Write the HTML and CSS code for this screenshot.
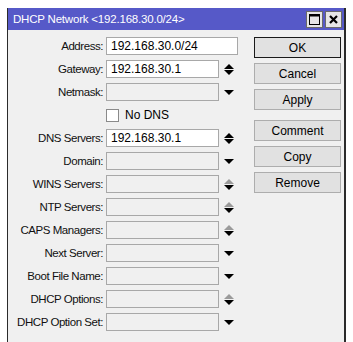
FILE: index.html
```html
<!DOCTYPE html>
<html>
<head>
<meta charset="utf-8">
<link rel="stylesheet" href="styles.css">
</head>
<body>
<div class="win">
  <div class="title">
    <span class="title-text">DHCP Network &lt;192.168.30.0/24&gt;</span>
    <div class="tbtns">
      <span class="tbtn"><svg width="13" height="13" viewBox="0 0 13 13"><rect x="1.5" y="1.5" width="10" height="10" fill="none" stroke="#000" stroke-width="1"/><rect x="1.5" y="1.5" width="10" height="2" fill="#000"/></svg></span>
      <span class="tbtn"><svg width="13" height="13" viewBox="0 0 13 13"><path d="M3 3 L10 10 M10 3 L3 10" stroke="#000" stroke-width="2.2"/></svg></span>
    </div>
  </div>
  <div class="body">
    <div class="form">
      <div class="row"><label>Address:</label><div class="field"><span class="inp wide on">192.168.30.0/24</span></div></div>
      <div class="row"><label>Gateway:</label><div class="field"><span class="inp on">192.168.30.1</span><span class="ico ud"><i class="up"></i><i class="dn"></i></span></div></div>
      <div class="row"><label>Netmask:</label><div class="field"><span class="inp"></span><span class="ico"><i class="dd"></i></span></div></div>
      <div class="row"><label></label><div class="field"><span class="chk"></span><span class="chklbl">No DNS</span></div></div>
      <div class="row"><label>DNS Servers:</label><div class="field"><span class="inp on">192.168.30.1</span><span class="ico ud"><i class="up"></i><i class="dn"></i></span></div></div>
      <div class="row"><label>Domain:</label><div class="field"><span class="inp"></span><span class="ico"><i class="dd"></i></span></div></div>
      <div class="row"><label>WINS Servers:</label><div class="field"><span class="inp"></span><span class="ico ud"><i class="up gray"></i><i class="dn"></i></span></div></div>
      <div class="row"><label>NTP Servers:</label><div class="field"><span class="inp"></span><span class="ico ud"><i class="up gray"></i><i class="dn"></i></span></div></div>
      <div class="row"><label>CAPS Managers:</label><div class="field"><span class="inp"></span><span class="ico ud"><i class="up gray"></i><i class="dn"></i></span></div></div>
      <div class="row"><label>Next Server:</label><div class="field"><span class="inp"></span><span class="ico"><i class="dd"></i></span></div></div>
      <div class="row"><label>Boot File Name:</label><div class="field"><span class="inp"></span><span class="ico"><i class="dd"></i></span></div></div>
      <div class="row"><label>DHCP Options:</label><div class="field"><span class="inp"></span><span class="ico ud"><i class="up gray"></i><i class="dn"></i></span></div></div>
      <div class="row"><label>DHCP Option Set:</label><div class="field"><span class="inp"></span><span class="ico"><i class="dd"></i></span></div></div>
    </div>
    <div class="btns">
      <div class="btn def">OK</div>
      <div class="btn">Cancel</div>
      <div class="btn">Apply</div>
      <div class="btn sep">Comment</div>
      <div class="btn">Copy</div>
      <div class="btn">Remove</div>
    </div>
  </div>
</div>
</body>
</html>
```
FILE: styles.css
```css
html, body {
  margin: 0;
  padding: 0;
  background: #ffffff;
}
body {
  font-family: "Liberation Sans", Arial, sans-serif;
  font-size: 11.5px;
  color: #000;
}
.win {
  margin: 8px 0 0 7px;
  width: 336px;
  height: 334px;
  border-left: 1px solid #2b2b2b;
  border-right: 2px solid #2b2b2b;
  background: #f0f0f0;
}
.title {
  height: 22px;
  background: #5659c8;
  display: flex;
  align-items: center;
  justify-content: space-between;
  padding: 0 2px 0 5px;
}
.title-text {
  color: #fff;
  font-size: 11.5px;
  letter-spacing: -0.2px;
}
.tbtns {
  display: flex;
  gap: 2px;
}
.tbtn {
  width: 15px;
  height: 15px;
  background: #e6e6e6;
  border: 1px solid #6a6a6a;
  display: flex;
  align-items: center;
  justify-content: center;
}
.body {
  display: flex;
  padding-top: 7px;
}
.form {
  display: flex;
  flex-direction: column;
  gap: 5px;
}
.row {
  display: flex;
  align-items: center;
  height: 18px;
}
.row label {
  width: 95px;
  text-align: right;
  padding-right: 3px;
  font-size: 11.5px;
  letter-spacing: -0.45px;
  color: #111;
}
.field {
  width: 132px;
  display: flex;
  align-items: center;
}
.inp {
  box-sizing: border-box;
  width: 114px;
  height: 18px;
  border: 1px solid #a8a8a8;
  background: #f0f0f0;
  padding-left: 4px;
  line-height: 16px;
  font-size: 12px;
}
.inp.on {
  background: #fff;
}
.inp.wide {
  width: 132px;
}
.ico {
  width: 18px;
  height: 18px;
  display: flex;
  flex-direction: column;
  align-items: center;
  justify-content: center;
  padding-left: 1px;
}
.ico i {
  display: block;
  width: 0;
  height: 0;
  border-left: 5px solid transparent;
  border-right: 5px solid transparent;
}
.ico .dd {
  border-top: 5px solid #000;
}
.ico.ud {
  gap: 1px;
}
.ico .up {
  border-bottom: 5px solid #000;
}
.ico .up.gray {
  border-bottom-color: #9a9a9a;
}
.ico .dn {
  border-top: 5px solid #000;
}
.chk {
  box-sizing: border-box;
  width: 13px;
  height: 13px;
  background: #fff;
  border: 1px solid #8a8a8a;
  margin-right: 6px;
}
.chklbl {
  font-size: 12px;
}
.btns {
  margin-left: 16px;
  display: flex;
  flex-direction: column;
  gap: 5px;
}
.btn {
  box-sizing: border-box;
  width: 87px;
  height: 21px;
  background: #e1e1e1;
  border: 1px solid #adadad;
  display: flex;
  align-items: center;
  justify-content: center;
  font-size: 12px;
}
.btn.def {
  border-color: #1a1a1a;
}
.btn.sep {
  margin-top: 5px;
}
```
